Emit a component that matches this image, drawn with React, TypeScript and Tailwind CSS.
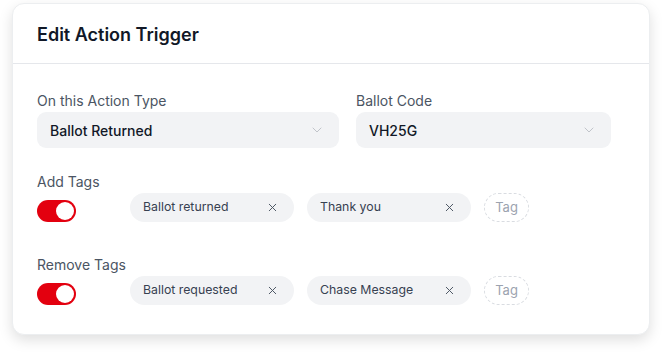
import { X, ChevronDown } from "lucide-react";

function Toggle() {
  return (
    <div className="w-[39px] h-[22px] rounded-full bg-[#e3000f] flex items-center justify-end p-[2px] mt-[7px]">
      <div className="w-[18px] h-[18px] rounded-full bg-white" />
    </div>
  );
}

function Chip({ label }: { label: string }) {
  return (
    <div className="w-[164px] h-[29px] rounded-full bg-[#f2f3f5] flex items-center justify-between pl-[13px] pr-[15px]">
      <span className="text-[12.3px] text-[#374151]">{label}</span>
      <X className="w-[13px] h-[13px] text-[#4b5563]" strokeWidth={1.8} />
    </div>
  );
}

function TagRow({ label, tags }: { label: string; tags: string[] }) {
  return (
    <div className="flex flex-col">
      <div className="text-[14px] leading-[20px] text-[#4b5563]">{label}</div>
      <div className="flex items-start mt-[1px]">
        <div className="w-[93px]">
          <Toggle />
        </div>
        <div className="flex gap-[13px]">
          {tags.map((t) => (
            <Chip key={t} label={t} />
          ))}
          <div className="w-[45px] h-[29px] rounded-full border border-dashed border-[#d9dce1] flex items-center justify-center text-[13px] text-[#9ca3af]">
            Tag
          </div>
        </div>
      </div>
    </div>
  );
}

function Select({ label, value, width }: { label: string; value: string; width: string }) {
  return (
    <div className={`flex flex-col ${width}`}>
      <div className="text-[14px] leading-[20px] text-[#4b5563]">{label}</div>
      <div className="mt-[1px] h-[36px] rounded-[9px] bg-[#f2f3f5] flex items-center justify-between pl-[13px] pr-[14px]">
        <span className="text-[14px] font-medium text-[#111827]">{value}</span>
        <ChevronDown className="w-[16px] h-[16px] text-[#b8bcc3]" strokeWidth={1.3} />
      </div>
    </div>
  );
}

export default function App() {
  return (
    <div
      className="w-[663px] h-[358px] bg-white pt-[3px] px-[12px]"
      style={{ fontFamily: "Inter, 'Noto Sans', sans-serif" }}
    >
      <div className="w-[638px] h-[332px] rounded-[12px] bg-white border border-[#eceef0] shadow-[0_5px_14px_rgba(0,0,0,0.13)]">
        <div className="h-[60px] border-b border-[#e5e7eb] flex items-center px-[24px] pt-[1px]">
          <h1 className="text-[18px] font-semibold text-[#111827]">Edit Action Trigger</h1>
        </div>
        <div className="px-[24px] pt-[27px] flex flex-col">
          <div className="flex gap-[17px]">
            <Select label="On this Action Type" value="Ballot Returned" width="w-[302px]" />
            <Select label="Ballot Code" value="VH25G" width="w-[255px]" />
          </div>
          <div className="mt-[24px]">
            <TagRow label="Add Tags" tags={["Ballot returned", "Thank you"]} />
          </div>
          <div className="mt-[33px]">
            <TagRow label="Remove Tags" tags={["Ballot requested", "Chase Message"]} />
          </div>
        </div>
      </div>
    </div>
  );
}
